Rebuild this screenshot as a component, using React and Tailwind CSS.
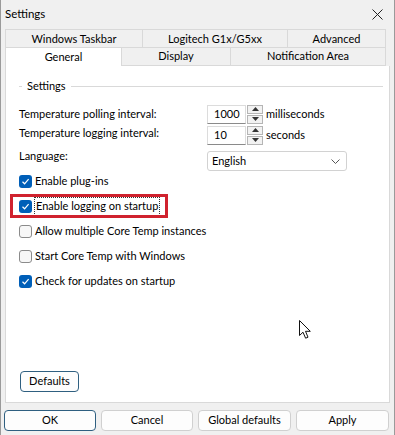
import React from "react";

const font = { fontFamily: 'Lato, "Noto Sans", sans-serif' };

function Check({ checked }) {
    if (!checked) {
        return (
            <span className="w-[13px] h-[13px] rounded-[3px] border border-[#8b8b8b] bg-[#f7f7f7] shrink-0" />
        );
    }
    return (
        <span className="w-[13px] h-[13px] rounded-[3px] bg-[#005fb8] flex items-center justify-center shrink-0">
            <svg width="9" height="9" viewBox="0 0 9 9" fill="none">
                <path d="M1.5 4.8 L3.6 6.8 L7.6 2.2" stroke="#ffffff" strokeWidth="1.2" />
            </svg>
        </span>
    );
}

function Spinner({ value, unit }) {
    return (
        <div className="flex items-center">
            <div className="w-[39px] h-[19px] bg-white border border-[#dcdcdc] border-b-[#8a8a8a] flex items-center pl-[6px]">
                {value}
            </div>
            <div className="w-[16px] h-[19px] flex flex-col ml-[1px]">
                <div className="h-[9px] border border-[#b5b5b5] bg-[#f2f2f2] flex items-center justify-center">
                    <svg width="7" height="4" viewBox="0 0 7 4">
                        <path d="M0 4 L3.5 0 L7 4 Z" fill="#333" />
                    </svg>
                </div>
                <div className="h-[9px] mt-[1px] border border-[#b5b5b5] bg-[#f2f2f2] flex items-center justify-center">
                    <svg width="7" height="4" viewBox="0 0 7 4">
                        <path d="M0 0 L3.5 4 L7 0 Z" fill="#333" />
                    </svg>
                </div>
            </div>
            <span className="ml-[3px]">{unit}</span>
        </div>
    );
}

function CheckRow({ checked, label, focused }) {
    return (
        <div className="h-[25px] flex items-center gap-[3px]">
            <Check checked={checked} />
            <span className={focused ? "px-[1px] outline outline-1 outline-dotted outline-[#333]" : ""}>
                {label}
            </span>
        </div>
    );
}

function Button({ children, primary, className }) {
    return (
        <button
            className={
                "h-[21px] rounded-[4px] bg-[#fdfdfd] text-[11px] text-black " +
                (primary ? "border border-[#2f5f80] " : "border border-[#d0d0d0] ") +
                className
            }
        >
            {children}
        </button>
    );
}

export default function App() {
    return (
        <div
            className="relative w-[395px] h-[435px] bg-[#f0f0f0] border-x border-[#9a9a9a] text-[11px] text-black flex flex-col overflow-hidden"
            style={font}
        >
            {/* title bar */}
            <div className="h-[28px] flex items-center justify-between pl-[4px] pr-[11px]">
                <span className="text-[11.5px]">Settings</span>
                <svg width="11" height="11" viewBox="0 0 11 11">
                    <path d="M0.5 0.5 L10.5 10.5 M10.5 0.5 L0.5 10.5" stroke="#222" strokeWidth="1" />
                </svg>
            </div>

            {/* tabs */}
            <div className="mx-[4px] mt-[1px] flex flex-col">
                <div className="h-[18px] flex">
                    <div className="w-[137px] pt-[2px] border-t border-l border-[#d9d9d9] flex items-center justify-center">Windows Taskbar</div>
                    <div className="w-[145px] pt-[2px] border-t border-l border-[#d9d9d9] flex items-center justify-center">Logitech G1x/G5xx</div>
                    <div className="w-[99px] pt-[2px] border-t border-x border-[#d9d9d9] flex items-center justify-center">Advanced</div>
                </div>
                <div className="h-[19px] flex">
                    <div className="w-[116px] bg-white border-t border-l border-[#d9d9d9] flex items-center justify-center">General</div>
                    <div className="w-[109px] border-t border-l border-b border-[#d9d9d9] flex items-center justify-center">Display</div>
                    <div className="w-[156px] border-t border-x border-b border-[#d9d9d9] flex items-center justify-center">Notification Area</div>
                </div>
            </div>

            {/* panel */}
            <div className="relative mx-[4px] h-[337px] bg-white border-x border-b border-[#d9d9d9] flex flex-col pl-[13px] pr-[6px]">
                <div className="h-[40px] flex items-center">
                    <span className="w-[3px] h-px bg-[#d9d9d9]" />
                    <span className="px-[5px]">Settings</span>
                    <span className="flex-1 h-px bg-[#d9d9d9]" />
                </div>

                <div className="flex items-center h-[20px] mt-[-2px]">
                    <span className="w-[188px]">Temperature polling interval:</span>
                    <Spinner value="1000" unit="milliseconds" />
                </div>
                <div className="flex items-center h-[20px] mt-[1px]">
                    <span className="w-[188px] -mt-[4px]">Temperature logging interval:</span>
                    <Spinner value="10" unit="seconds" />
                </div>
                <div className="flex h-[20px] mt-[6px]">
                    <span className="w-[188px] -mt-[3px]">Language:</span>
                    <div className="w-[140px] h-[20px] bg-white border border-[#d2d2d2] rounded-[3px] flex items-center justify-between pl-[4px] pr-[6px]">
                        <span>English</span>
                        <svg width="9" height="5" viewBox="0 0 9 5" fill="none">
                            <path d="M0.5 0.5 L4.5 4.5 L8.5 0.5" stroke="#555" strokeWidth="1" />
                        </svg>
                    </div>
                </div>

                <div className="mt-[-2px] flex flex-col">
                    <CheckRow checked label="Enable plug-ins" />
                    <div className="relative">
                        <CheckRow checked focused label="Enable logging on startup" />
                        <div className="absolute left-[-9px] top-[0px] w-[158px] h-[24px] border-[3px] border-[#d0222e]" />
                    </div>
                    <CheckRow label="Allow multiple Core Temp instances" />
                    <CheckRow label="Start Core Temp with Windows" />
                    <CheckRow checked label="Check for updates on startup" />
                </div>

                <div className="flex-1" />
                <div className="mb-[10px] ml-[1px]">
                    <Button primary className="w-[59px]">Defaults</Button>
                </div>

                <svg className="absolute left-[293px] top-[254px]" width="14" height="20" viewBox="0 0 14 20">
                    <path
                        d="M0.5 0.5 L0.5 15.5 L4 12.2 L6.6 18.2 L9 17.2 L6.5 11.3 L11.3 11.3 Z"
                        fill="#ffffff"
                        stroke="#111"
                        strokeWidth="1"
                        strokeLinejoin="round"
                    />
                </svg>
            </div>

            {/* bottom buttons */}
            <div className="mt-[7px] flex gap-[5px] pl-[3px]">
                <Button primary className="w-[92px]">OK</Button>
                <Button className="w-[92px]">Cancel</Button>
                <Button className="w-[93px]">Global defaults</Button>
                <Button className="w-[93px]">Apply</Button>
            </div>
        </div>
    );
}
